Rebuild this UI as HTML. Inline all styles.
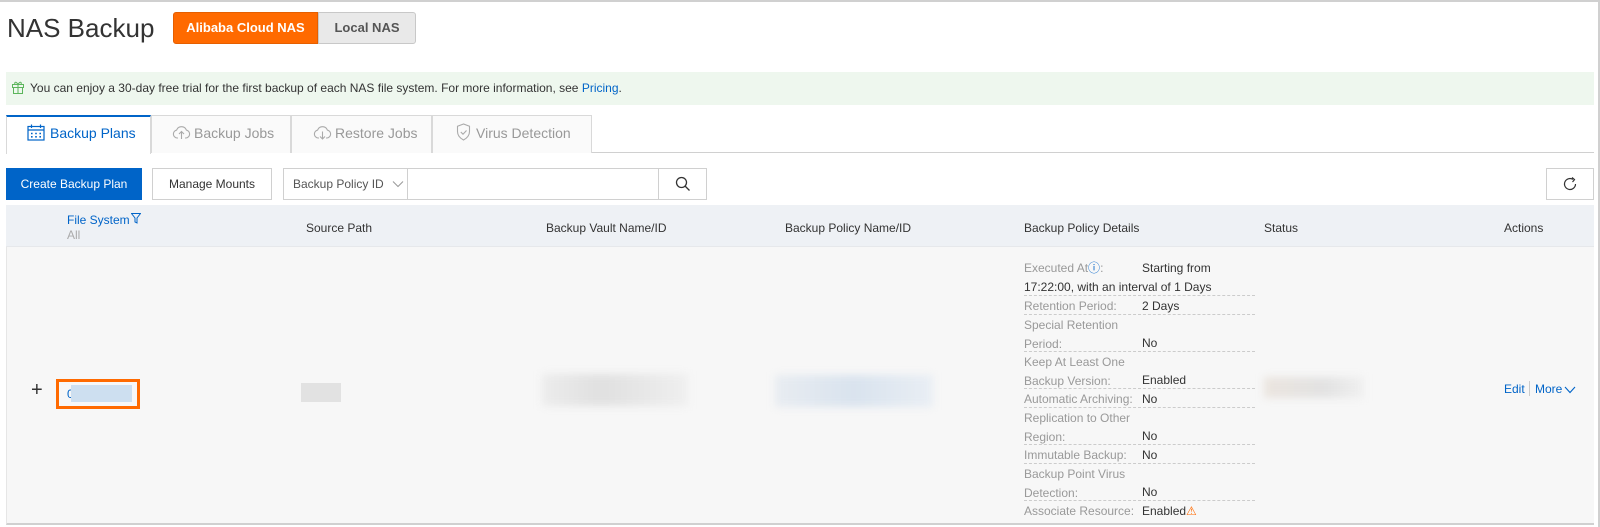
<!DOCTYPE html>
<html><head><meta charset="utf-8"><style>
*{box-sizing:border-box;margin:0;padding:0}
body{width:1600px;height:527px;overflow:hidden;background:#fff;font-family:"Liberation Sans",sans-serif;font-size:12px;color:#333;position:relative}
.a{position:absolute}
.frame{left:0;top:0;width:1600px;height:527px;border-top:2px solid #d0d0d0;border-right:2px solid #d0d0d0}
.title{left:7px;top:12px;font-size:26px;color:#333;line-height:32px}
.tg{top:12px;height:32px;line-height:30px;font-weight:bold;font-size:13px;text-align:center}
.banner{left:6px;top:72px;width:1588px;height:33px;background:#eef7ee;line-height:33px;padding-left:24px;color:#333}
.tab{top:115px;height:38px;border:1px solid #d9d9d9;border-bottom:none;background:#fafafa}
.tt{top:125px;font-size:14px;color:#999;line-height:16px}
.btn{top:168px;height:32px;border:1px solid #d0d0d0;line-height:30px;text-align:center;background:#fff;color:#333}
.hd{top:205px;left:6px;width:1588px;height:42px;background:#eef1f5;border-bottom:1px solid #e6e8eb}
.body{top:247px;left:6px;width:1588px;height:278px;background:#f7f7f7;border-left:1px solid #e6e6e6;border-bottom:2px solid #d0d0d0}
.th{top:221px;color:#333}
.dl{left:1024px;width:231px;border-bottom:1px dashed #ccc;color:#999;line-height:18.5px;padding-top:1px}
.dl span{position:absolute;left:118px;color:#333}
.blur{filter:blur(4px)}
</style></head><body>
<div class="a frame"></div>
<div class="a title">NAS Backup</div>
<div class="a tg" style="left:173px;width:145px;background:#ff6a00;color:#fff;border:1px solid #e55f00;border-radius:3px 0 0 3px">Alibaba Cloud NAS</div>
<div class="a tg" style="left:318px;width:98px;background:#e9e9e9;color:#555;border:1px solid #c8c8c8;border-radius:0 3px 3px 0">Local NAS</div>

<div class="a banner">You can enjoy a 30-day free trial for the first backup of each NAS file system. For more information, see <span style="color:#0064c8">Pricing</span>.</div>
<svg class="a" style="left:11px;top:80px" width="14" height="14" viewBox="0 0 14 14" fill="none" stroke="#5bb55b" stroke-width="1"><rect x="1.5" y="4.5" width="11" height="3"/><rect x="2.5" y="7.5" width="9" height="6"/><path d="M7 4.5v9M7 4.5C5 1 3 2 4 4.5M7 4.5C9 1 11 2 10 4.5"/></svg>

<div class="a" style="left:6px;top:152px;width:1588px;border-top:1px solid #d0d0d0"></div>
<div class="a tab" style="left:6px;width:145px;border-top:2px solid #0064c8;background:#fff;height:39px"></div>
<div class="a tt" style="left:50px;color:#0064c8">Backup Plans</div>
<svg class="a" style="left:27px;top:124px" width="18" height="17" viewBox="0 0 18 17" fill="none" stroke="#0064c8" stroke-width="1.2"><rect x="1" y="2.5" width="16" height="13.5"/><path d="M1 6h16M4.5 0.5v3.5M13.5 0.5v3.5"/><path d="M4 9.5h1.6M8.2 9.5h1.6M12.4 9.5h1.6M4 12.8h1.6M8.2 12.8h1.6M12.4 12.8h1.6" stroke-width="1.6"/></svg>
<div class="a tab" style="left:151px;width:140px"></div>
<div class="a tt" style="left:194px">Backup Jobs</div>
<svg class="a" style="left:172px;top:124px" width="19" height="16" viewBox="0 0 19 16" fill="none" stroke="#aaa" stroke-width="1.1"><path d="M6 14H5A4 4 0 0 1 4.6 6.1 5.2 5.2 0 0 1 14.4 6.1 4 4 0 0 1 14 14H13"/><path d="M9.5 15V7.5M7 10 9.5 7.5 12 10"/></svg>
<div class="a tab" style="left:291px;width:141px"></div>
<div class="a tt" style="left:335px">Restore Jobs</div>
<svg class="a" style="left:313px;top:124px" width="19" height="16" viewBox="0 0 19 16" fill="none" stroke="#aaa" stroke-width="1.1"><path d="M6 14H5A4 4 0 0 1 4.6 6.1 5.2 5.2 0 0 1 14.4 6.1 4 4 0 0 1 14 14H13"/><path d="M9.5 7.5V15M7 12.5 9.5 15 12 12.5"/></svg>
<div class="a tab" style="left:432px;width:160px"></div>
<div class="a tt" style="left:476px">Virus Detection</div>
<svg class="a" style="left:456px;top:123px" width="15" height="18" viewBox="0 0 15 18" fill="none" stroke="#aaa" stroke-width="1.1"><path d="M7.5 1 1.5 3.2v5.3c0 4.3 3.2 7 6 8.5 2.8-1.5 6-4.2 6-8.5V3.2z"/><path d="M4.8 9 7 11.2 10.5 7.5"/></svg>

<div class="a btn" style="left:6px;width:136px;background:#0064c8;border-color:#0064c8;color:#fff">Create Backup Plan</div>
<div class="a btn" style="left:152px;width:120px">Manage Mounts</div>
<div class="a btn" style="left:283px;width:125px;text-align:left;padding-left:9px;color:#555">Backup Policy ID</div>
<svg class="a" style="left:392px;top:180px" width="12" height="8" viewBox="0 0 12 8" fill="none" stroke="#999"><path d="M1 1.5 6 6.5 11 1.5"/></svg>
<div class="a btn" style="left:407px;width:252px"></div>
<div class="a btn" style="left:658px;width:49px"></div>
<svg class="a" style="left:675px;top:176px" width="16" height="16" viewBox="0 0 16 16" fill="none" stroke="#333" stroke-width="1.3"><circle cx="6.5" cy="6.5" r="5"/><path d="M10 10l4.5 4.5"/></svg>
<div class="a btn" style="left:1546px;width:48px"></div>
<svg class="a" style="left:1562px;top:176px" width="16" height="16" viewBox="0 0 16 16" fill="none" stroke="#333" stroke-width="1.2"><path d="M13.5 8A5.5 5.5 0 1 1 11 3.4"/><path d="M10 1.5 12.5 3.6 10.5 6"/></svg>

<div class="a hd"></div>
<div class="a" style="left:67px;top:213px;color:#0064c8">File System</div>
<svg class="a" style="left:131px;top:213px" width="10" height="11" viewBox="0 0 10 11" fill="none" stroke="#0064c8"><path d="M0.5 0.5h9L6 5v5L4 9V5z"/></svg>
<div class="a" style="left:67px;top:228px;color:#aaa">All</div>
<div class="a th" style="left:306px">Source Path</div>
<div class="a th" style="left:546px">Backup Vault Name/ID</div>
<div class="a th" style="left:785px">Backup Policy Name/ID</div>
<div class="a th" style="left:1024px">Backup Policy Details</div>
<div class="a th" style="left:1264px">Status</div>
<div class="a th" style="left:1504px">Actions</div>

<div class="a body"></div>
<div class="a" style="left:31px;top:379px;font-size:20px;line-height:22px;color:#333">+</div>
<div class="a" style="left:56px;top:379px;width:84px;height:30px;border:3px solid #ff6a00"></div>
<div class="a" style="left:67px;top:387px;color:#0064c8">0</div>
<div class="a" style="left:71px;top:385px;width:61px;height:17px;background:#cddff0"></div>
<div class="a" style="left:301px;top:383px;width:40px;height:19px;background:#e2e2e2"></div>
<div class="a blur" style="left:542px;top:374px;width:146px;height:32px;background:linear-gradient(90deg,#ececec,#e0e0e0 40%,#efefef)"></div>
<div class="a blur" style="left:775px;top:375px;width:158px;height:32px;background:linear-gradient(90deg,#e8ecf1,#d9e3ee 50%,#e9eef4)"></div>
<div class="a blur" style="left:1264px;top:377px;width:100px;height:21px;background:linear-gradient(90deg,#ebe5df,#e2e2e2 60%,#f0f0f0)"></div>

<div class="a dl" style="top:258px;height:38px">Executed At<span style="position:static;color:#0064c8">&#9432;</span>:<span style="top:1px">Starting from</span><br><b style="font-weight:normal;color:#333">17:22:00, with an interval of 1 Days</b></div>
<div class="a dl" style="top:296px;height:19px">Retention Period:<span style="top:1px">2 Days</span></div>
<div class="a dl" style="top:315px;height:37px">Special Retention<br>Period:<span style="top:19px">No</span></div>
<div class="a dl" style="top:352px;height:37px">Keep At Least One<br>Backup Version:<span style="top:19px">Enabled</span></div>
<div class="a dl" style="top:389px;height:19px">Automatic Archiving:<span style="top:1px">No</span></div>
<div class="a dl" style="top:408px;height:37px">Replication to Other<br>Region:<span style="top:19px">No</span></div>
<div class="a dl" style="top:445px;height:19px">Immutable Backup:<span style="top:1px">No</span></div>
<div class="a dl" style="top:464px;height:37px">Backup Point Virus<br>Detection:<span style="top:19px">No</span></div>
<div class="a dl" style="top:501px;height:19px;border:none">Associate Resource:<span style="top:1px">Enabled<b style="color:#ff6a00;font-weight:normal">&#9888;</b></span></div>

<div class="a" style="left:1504px;top:382px;color:#0064c8">Edit</div>
<div class="a" style="left:1529px;top:381px;height:15px;border-left:1px solid #ccc"></div>
<div class="a" style="left:1535px;top:382px;color:#0064c8">More</div>
<svg class="a" style="left:1564px;top:386px" width="12" height="8" viewBox="0 0 12 8" fill="none" stroke="#0064c8" stroke-width="1.1"><path d="M1 1 6 6.5 11 1"/></svg>
</body></html>
